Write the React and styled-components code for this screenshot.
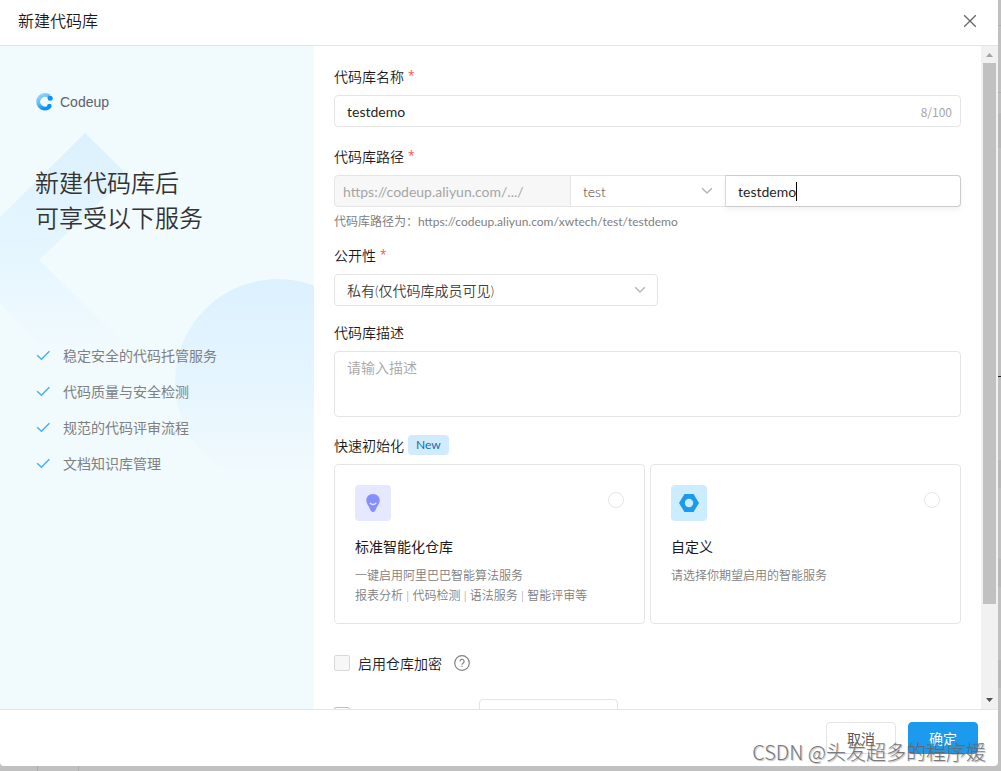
import React, { useState } from 'react'
import styled, { createGlobalStyle, css } from 'styled-components'

const GlobalStyle = createGlobalStyle`
  * {
    box-sizing: border-box;
  }
  body {
    margin: 0;
    background: #c0c0c0;
    color: #1a1a1a;
    font-family: Lato, 'Noto Sans CJK SC', sans-serif;
    font-size: 14px;
  }
  button, input, select, textarea {
    font-family: inherit;
    font-size: inherit;
  }
`;

//LAYOUT
const Page = styled.div`
  position: relative;
  height: 100vh;
  padding: 0 3px 5px 0;
  background:
    linear-gradient(#222, #222) right 376px / 3px 1px no-repeat,
    linear-gradient(#b0b0b0, #b0b0b0) right 25px / 3px 1px no-repeat,
    linear-gradient(#b0b0b0, #b0b0b0) right 92px / 3px 1px no-repeat,
    linear-gradient(#b8b8b8, #b8b8b8) right 113px / 3px 35px no-repeat,
    linear-gradient(#b8b8b8, #b8b8b8) right 460px / 3px 28px no-repeat,
    linear-gradient(#b8b8b8, #b8b8b8) right 559px / 3px 28px no-repeat,
    linear-gradient(#b8b8b8, #b8b8b8) right 660px / 3px 28px no-repeat,
    linear-gradient(#aaa, #aaa) 37px bottom / 1px 5px no-repeat,
    linear-gradient(#b0b0b0, #b0b0b0) 78px bottom / 1px 5px no-repeat,
    #c0c0c0;
`;

const Dialog = styled.section`
  display: flex;
  flex-direction: column;
  height: 100%;
  background: #fff;
  border-radius: 0 0 4px 4px;
  overflow: hidden;
`;

const Header = styled.header`
  display: flex;
  align-items: center;
  justify-content: space-between;
  flex: none;
  height: 46px;
  padding: 0 20px 4px 18px;
  border-bottom: 1px solid #e5e5e5;
`;

const Title = styled.h1`
  margin: 0;
  font-size: 16px;
  font-weight: 350;
  line-height: 24px;
`;

const CloseButton = styled.button`
  display: flex;
  padding: 0;
  border: none;
  background: none;
  color: #666;
  cursor: pointer;
`;

const Body = styled.div`
  display: flex;
  flex: 1;
  min-height: 0;
`;

const Footer = styled.footer`
  display: flex;
  justify-content: flex-end;
  flex: none;
  gap: 12px;
  padding: 12px 20px;
  border-top: 1px solid #e5e5e5;
`;

const Button = styled.button`
  width: 70px;
  height: 32px;
  padding: 0;
  border: 1px solid ${({ $primary }) => ($primary ? '#1b9aee' : '#e5e5e5')};
  border-radius: 4px;
  background: ${({ $primary }) => ($primary ? '#1b9aee' : '#fff')};
  color: ${({ $primary }) => ($primary ? '#fff' : '#595959')};
  cursor: pointer;
`;

const Watermark = styled.div`
  position: absolute;
  right: 15px;
  bottom: 4px;
  font-family: 'Noto Sans CJK SC', sans-serif;
  font-size: 20px;
  font-weight: 300;
  line-height: 30px;
  color: rgba(100, 100, 100, 0.85);
  text-shadow: 1px 1px 1px rgba(120, 120, 120, 0.5);
  pointer-events: none;
`;

//SIDE PANEL
const Side = styled.aside`
  position: relative;
  flex: none;
  width: 314px;
  padding: 45px 35px 0;
  background: #f1fafd;
  overflow: hidden;
`;

const Shapes = styled.svg`
  position: absolute;
  top: 0;
  left: 0;
`;

const SideContent = styled.div`
  position: relative;
`;

const Brand = styled.div`
  display: flex;
  align-items: center;
  gap: 6px;
  height: 22px;
  font-family: 'Liberation Sans', sans-serif;
  font-size: 14px;
  color: #5d6170;
`;

const SideTitle = styled.h2`
  margin: 52px 0 102px;
  font-size: 24px;
  font-weight: 350;
  line-height: 35px;
  color: #333;
`;

const Benefits = styled.ul`
  margin: 0;
  padding: 0;
  list-style: none;
`;

const Benefit = styled.li`
  display: flex;
  align-items: center;
  gap: 12px;
  height: 36px;
  color: #808080;
`;

//FORM
const Form = styled.form`
  flex: 1;
  min-width: 0;
  padding: 21px 20px 20px;
  overflow-y: auto;
  scrollbar-width: none;
`;

const Field = styled.div`
  margin-bottom: ${({ $gap }) => $gap || 17}px;
`;

const Label = styled.label`
  display: block;
  margin-bottom: 8px;
  font-weight: 350;
  line-height: 20px;
`;

const Star = styled.span`
  margin-left: 4px;
  font-family: 'Open Sans', sans-serif;
  font-size: 12px;
  font-weight: 400;
  vertical-align: 2px;
  line-height: 1;
  color: #ee5a50;
`;

const control = css`
  width: 100%;
  height: 32px;
  padding: 0 12px;
  border: 1px solid #e5e5e5;
  border-radius: 4px;
  outline: none;
  background: #fff;
  color: #262626;
`;

const InputBox = styled.div`
  ${control}
  display: flex;
  align-items: center;
  padding-right: 8px;
`;

const PlainInput = styled.input`
  flex: 1;
  min-width: 0;
  padding: 0;
  border: none;
  outline: none;
  background: none;
  color: #262626;
`;

const Counter = styled.span`
  font-family: 'Noto Sans CJK SC', sans-serif;
  font-size: 12px;
  color: #a6a6a6;
`;

const PathGroup = styled.div`
  display: grid;
  grid-template-columns: 237fr 154fr 236fr;
`;

const PrefixInput = styled.input`
  ${control}
  padding: 0 8px;
  border-radius: 4px 0 0 4px;
  background: #f7f7f7;
  color: #a6a6a6;
`;

const SelectWrap = styled.div`
  position: relative;
  max-width: ${({ $max }) => ($max ? `${$max}px` : 'none')};

  svg {
    position: absolute;
    top: 10px;
    right: 12px;
    color: #b3b3b3;
    pointer-events: none;
  }
`;

const Select = styled.select`
  ${control}
  appearance: none;
  color: #404040;
  font-weight: 350;
  ${({ $joined }) => $joined && css`
    border-width: 1px 0;
    border-radius: 0;
  `}
`;

const SlugWrap = styled.div`
  position: relative;
`;

const SlugInput = styled.input`
  ${control}
  border-color: #cccccc;
  border-left-color: #d9d9d9;
  border-radius: 0 4px 4px 0;
  box-shadow: 0 3px 6px rgba(0, 0, 0, 0.05);
`;

const Caret = styled.span`
  position: absolute;
  top: 7px;
  left: 71px;
  width: 1px;
  height: 19px;
  background: #000;
`;

const Help = styled.p`
  margin: 7px 0 0;
  font-size: 12px;
  line-height: 15px;
  color: #808080;
`;

const Textarea = styled.textarea`
  ${control}
  display: block;
  height: 66px;
  padding: 6px 12px;
  line-height: 20px;
  font-weight: 350;
  resize: none;

  &::placeholder {
    color: #a6a6a6;
  }
`;

const SectionTitle = styled.div`
  display: flex;
  align-items: center;
  gap: 4px;
  height: 22px;
  margin-bottom: 8px;
  font-weight: 350;
`;

const Badge = styled.span`
  padding: 0 8px;
  border-radius: 4px;
  background: #d1ebfc;
  color: #0f6fb0;
  font-size: 12px;
  font-weight: 400;
  line-height: 20px;
`;

const Cards = styled.div`
  display: grid;
  grid-template-columns: 1fr 1fr;
  gap: 5px;
`;

const Card = styled.label`
  padding: 20px 20px 17px;
  border: 1px solid #e5e5e5;
  border-radius: 4px;
  cursor: pointer;
`;

const CardTop = styled.div`
  display: flex;
  justify-content: space-between;
  margin-bottom: 15px;
`;

const CardIcon = styled.span`
  display: flex;
  align-items: center;
  justify-content: center;
  width: 36px;
  height: 36px;
  border-radius: 4px;
  background: ${({ $bg }) => $bg};
`;

const Radio = styled.input`
  appearance: none;
  width: 16px;
  height: 16px;
  margin: 7px 0 0;
  border: 1px solid #e5e5e5;
  border-radius: 50%;
  background: #fff;

  &:checked {
    border: 5px solid #1b9aee;
  }
`;

const CardTitle = styled.div`
  margin-bottom: 8px;
  line-height: 22px;
`;

const CardText = styled.div`
  font-size: 12px;
  font-weight: 350;
  line-height: 20px;
  color: #808080;
`;

const CheckRow = styled.div`
  display: flex;
  align-items: center;
  gap: 12px;
  height: 22px;
  margin: 28px 0 25px;
  font-weight: 350;
`;

const CheckLabel = styled.label`
  display: flex;
  align-items: center;
  gap: 8px;
`;

const Checkbox = styled.input`
  appearance: none;
  width: 16px;
  height: 16px;
  margin: 0;
  border: 1px solid ${({ disabled }) => (disabled ? '#d9d9d9' : '#bfbfbf')};
  border-radius: 2px;
  background: ${({ disabled }) => (disabled ? '#f7f7f7' : '#fff')};
`;

const TemplateRow = styled.div`
  display: grid;
  grid-template-columns: 145px 139px;
  align-items: center;
`;

//SCROLLBAR
const Scrollbar = styled.div`
  display: flex;
  flex-direction: column;
  align-items: center;
  flex: none;
  width: 17px;
  background: #f1f1f1;
`;

const Arrow = styled.svg`
  flex: none;
  width: 17px;
  height: 17px;
`;

const Track = styled.div`
  flex: 1;
  width: 13px;
`;

const Thumb = styled.div`
  height: 86%;
  background: #c1c1c1;
`;

const benefits = [
  '稳定安全的代码托管服务',
  '代码质量与安全检测',
  '规范的代码评审流程',
  '文档知识库管理',
];

const Chevron = () => (
  <svg width="12" height="12" viewBox="0 0 12 12" fill="none" stroke="currentColor" strokeWidth="1.3">
    <path d="M1.2 3.2 6 8l4.8-4.8" />
  </svg>
);

const Check = () => (
  <svg width="16" height="16" viewBox="0 0 16 16" fill="none" stroke="#4aaef5" strokeWidth="1.5">
    <path d="M2.2 8.2 6.4 12.2 14.4 4.3" />
  </svg>
);

const Logo = () => (
  <svg width="19" height="20" viewBox="0 0 19 20" fill="none">
    <defs>
      <linearGradient id="ring" x1="0" y1="0" x2="0.5" y2="1">
        <stop offset="0" stopColor="#9bd6fb" />
        <stop offset="0.5" stopColor="#63bdfb" />
        <stop offset="1" stopColor="#0a93fb" />
      </linearGradient>
    </defs>
    <path d="M14.3 4.4A6.8 6.8 0 1 0 14.3 15" stroke="url(#ring)" strokeWidth="4" />
    <circle cx="15.2" cy="6.2" r="2.5" fill="#0a93fb" />
    <circle cx="14.4" cy="14" r="2.3" fill="#0a93fb" />
  </svg>
);

const PanelShapes = () => (
  <Shapes width="314" height="470" viewBox="0 0 314 470">
    <defs>
      <linearGradient id="band" gradientUnits="userSpaceOnUse" x1="0" y1="87" x2="0" y2="302">
        <stop offset="0" stopColor="#dcf1fd" />
        <stop offset="0.6" stopColor="#e6f6ff" />
        <stop offset="1" stopColor="#f1fafd" />
      </linearGradient>
      <linearGradient id="disc" x1="0" y1="0" x2="0" y2="1">
        <stop offset="0" stopColor="#dcf1fe" />
        <stop offset="0.5" stopColor="#e5f5fe" />
        <stop offset="0.95" stopColor="#f1fafd" />
      </linearGradient>
    </defs>
    <path d="M85 87 128 129 39 214 128 302H45L-43 214z" fill="url(#band)" />
    <circle cx="278" cy="336" r="103" fill="url(#disc)" />
  </Shapes>
);

const App = () => {
  const [name, setName] = useState('testdemo');
  const [slug, setSlug] = useState('testdemo');

  return (
    <>
      <GlobalStyle />
      <Page>
        <Dialog role="dialog" aria-labelledby="dialog-title">
          <Header>
            <Title id="dialog-title">新建代码库</Title>
            <CloseButton type="button" aria-label="关闭">
              <svg width="16" height="16" viewBox="0 0 16 16" fill="none" stroke="currentColor" strokeWidth="1.3">
                <path d="M2.2 2.2 13.8 13.8M13.8 2.2 2.2 13.8" />
              </svg>
            </CloseButton>
          </Header>

          <Body>
            <Side>
              <PanelShapes />
              <SideContent>
                <Brand>
                  <Logo />
                  Codeup
                </Brand>
                <SideTitle>
                  新建代码库后
                  <br />
                  可享受以下服务
                </SideTitle>
                <Benefits>
                  {benefits.map((text) => (
                    <Benefit key={text}>
                      <Check />
                      {text}
                    </Benefit>
                  ))}
                </Benefits>
              </SideContent>
            </Side>

            <Form>
              <Field $gap={20}>
                <Label htmlFor="repo-name">代码库名称<Star>*</Star></Label>
                <InputBox>
                  <PlainInput id="repo-name" value={name} maxLength={100} onChange={(e) => setName(e.target.value)} />
                  <Counter>{name.length}/100</Counter>
                </InputBox>
              </Field>

              <Field>
                <Label htmlFor="repo-path">代码库路径<Star>*</Star></Label>
                <PathGroup>
                  <PrefixInput aria-label="域名" value="https://codeup.aliyun.com/.../" disabled />
                  <SelectWrap>
                    <Select $joined aria-label="代码组" defaultValue="test">
                      <option>test</option>
                    </Select>
                    <Chevron />
                  </SelectWrap>
                  <SlugWrap>
                    <SlugInput id="repo-path" value={slug} onChange={(e) => setSlug(e.target.value)} />
                    <Caret />
                  </SlugWrap>
                </PathGroup>
                <Help>代码库路径为：https://codeup.aliyun.com/xwtech/test/{slug}</Help>
              </Field>

              <Field>
                <Label htmlFor="visibility">公开性<Star>*</Star></Label>
                <SelectWrap $max={324}>
                  <Select id="visibility" defaultValue="private">
                    <option value="private">私有(仅代码库成员可见)</option>
                  </Select>
                  <Chevron />
                </SelectWrap>
              </Field>

              <Field>
                <Label htmlFor="description">代码库描述</Label>
                <Textarea id="description" placeholder="请输入描述" />
              </Field>

              <SectionTitle>
                快速初始化
                <Badge>New</Badge>
              </SectionTitle>
              <Cards>
                <Card>
                  <CardTop>
                    <CardIcon $bg="#e6e8ff">
                      <svg width="20" height="20" viewBox="0 0 20 20">
                        <path d="M10 1C6.1 1 3.3 3.8 3.3 7.5c0 3 2.4 5.2 3.7 8.5.7 1.8 1.4 3 3 3s2.3-1.2 3-3c1.3-3.3 3.7-5.5 3.7-8.5C16.7 3.8 13.9 1 10 1z" fill="#858fff" />
                        <path d="M6.8 10c1.8 2 4.6 2 6.4 0" fill="none" stroke="#e6e8ff" strokeWidth="1.3" />
                      </svg>
                    </CardIcon>
                    <Radio type="radio" name="init" value="standard" />
                  </CardTop>
                  <CardTitle>标准智能化仓库</CardTitle>
                  <CardText>
                    一键启用阿里巴巴智能算法服务
                    <br />
                    报表分析 | 代码检测 | 语法服务 | 智能评审等
                  </CardText>
                </Card>
                <Card>
                  <CardTop>
                    <CardIcon $bg="#ccecff">
                      <svg width="20" height="20" viewBox="0 0 20 20">
                        <path d="M5.5 1h9L20 10l-5.5 9h-9L0 10z" fill="#1b9aee" />
                        <circle cx="10" cy="10" r="4.2" fill="#ccecff" />
                      </svg>
                    </CardIcon>
                    <Radio type="radio" name="init" value="custom" />
                  </CardTop>
                  <CardTitle>自定义</CardTitle>
                  <CardText>请选择你期望启用的智能服务</CardText>
                </Card>
              </Cards>

              <CheckRow>
                <CheckLabel>
                  <Checkbox type="checkbox" disabled />
                  启用仓库加密
                </CheckLabel>
                <svg width="16" height="16" viewBox="0 0 16 16" fill="none" stroke="#808080" strokeWidth="1.2">
                  <circle cx="8" cy="8" r="7.3" />
                  <path d="M5.9 6.4a2.1 2.1 0 1 1 3.1 1.8c-.7.4-1 .7-1 1.5" />
                  <path d="M8 10.8v1.3" />
                </svg>
              </CheckRow>

              <TemplateRow>
                <Checkbox type="checkbox" aria-label="添加文件" />
                <Select aria-label="模板" />
              </TemplateRow>
            </Form>

            <Scrollbar aria-hidden="true">
              <Arrow viewBox="0 0 17 17"><path d="M5 11h7L8.5 7z" fill="#a3a3a3" /></Arrow>
              <Track>
                <Thumb />
              </Track>
              <Arrow viewBox="0 0 17 17"><path d="M5 6h7L8.5 10z" fill="#505050" /></Arrow>
            </Scrollbar>
          </Body>

          <Footer>
            <Button type="button">取消</Button>
            <Button type="button" $primary>确定</Button>
          </Footer>
        </Dialog>
        <Watermark>CSDN @头发超多的程序媛</Watermark>
      </Page>
    </>
  )
}

export default App
